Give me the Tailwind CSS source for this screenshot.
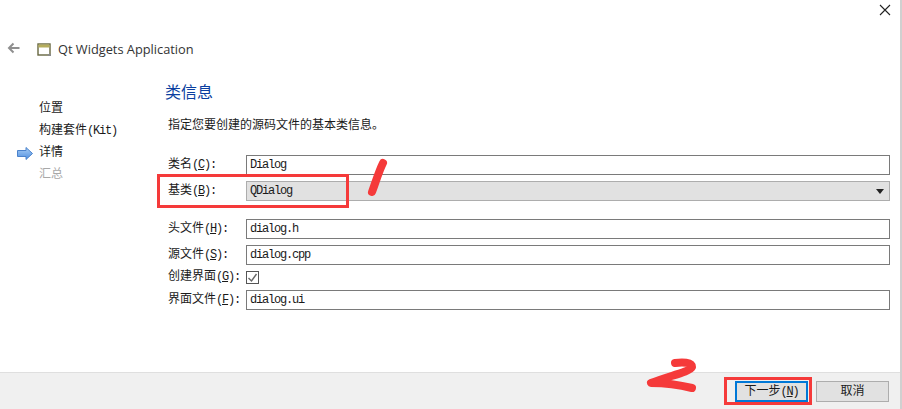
<!DOCTYPE html>
<html><head><meta charset="utf-8"><script src="https://cdn.jsdelivr.net/npm/@tailwindcss/browser@4"></script></head>
<body class="bg-white">
<div class="relative w-[902px] h-[409px] overflow-hidden bg-white flex flex-col border-r-[2px] border-[#d0d0d0] text-[12px] leading-[16px] text-[#1a1a1a] font-['Liberation_Mono','Noto_Sans_CJK_SC',monospace]">
  <div class="h-[372px] flex flex-col">
    <div class="h-[31px] flex justify-end items-start pt-[3px] pr-[9px]">
      <svg width="12" height="12" viewBox="0 0 12 12" class="mt-[1px]"><path d="M1 1L11 11M11 1L1 11" stroke="#222" stroke-width="1.1" fill="none"/></svg>
    </div>
    <div class="h-[38px] flex items-center pl-[7px]">
      <svg width="13" height="12" viewBox="0 0 13 12" class="-mt-[4px]"><path d="M12.5 6H2M6.5 1.5L2 6l4.5 4.5" stroke="#8f8f8f" stroke-width="2" fill="none"/></svg>
      <svg width="15" height="14" viewBox="0 0 15 14" class="ml-[17px] -mt-[1px]"><rect x="1" y="1" width="12" height="11" fill="#fff" stroke="#66663f" stroke-width="1.4"/><rect x="1.5" y="1.5" width="11" height="3" fill="#b5ad5c"/><path d="M11 11h3v2h-3z" fill="#8a8a8a"/></svg>
      <span class="ml-[6px] -mt-[2px] font-['Open_Sans'] text-[12.8px] text-[#333]">Qt Widgets Application</span>
    </div>
    <div class="flex flex-1">
      <div class="w-[165px] pt-[32px]">
        <div class="flex flex-col gap-[6px]">
          <div class="h-[16px] pl-[39px]">位置</div>
          <div class="h-[16px] pl-[39px]">构建套件<span class="tracking-[-1.2px]">(Kit)</span></div>
          <div class="h-[16px] pl-[17px] flex items-center gap-[6px]">
            <svg width="16" height="13" viewBox="0 0 16 13"><defs><linearGradient id="a" x1="0" y1="0" x2="0" y2="1"><stop offset="0" stop-color="#a8cdf5"/><stop offset="1" stop-color="#4f8fe0"/></linearGradient></defs><path d="M.5 3.5H9V.5l6.5 6-6.5 6v-3H.5z" fill="url(#a)" stroke="#4a82cc"/></svg>
            <span>详情</span>
          </div>
          <div class="h-[16px] pl-[39px] text-[#a8a8a8]">汇总</div>
        </div>
      </div>
      <div class="flex-1 pr-[10px]">
        <div class="text-[16px] leading-[22px] text-[#0b3fa0] mt-[14px]">类信息</div>
        <div class="mt-[13px] ml-[3px]">指定您要创建的源码文件的基本类信息。</div>
        <div class="mt-[21px] ml-[3px] flex flex-col">
          <div class="flex items-center h-[20px]">
            <span class="w-[78px]">类名<span class="tracking-[-1.2px]">(<span class="underline">C</span>):</span></span>
            <div class="flex-1 h-[20px] border border-[#7a7a7a] px-[3px] flex items-center"><span class="tracking-[-1.2px]">Dialog</span></div>
          </div>
          <div class="flex items-center h-[20px] mt-[6px]">
            <span class="w-[78px]">基类<span class="tracking-[-1.2px]">(<span class="underline">B</span>):</span></span>
            <div class="flex-1 h-[20px] border border-[#adadad] bg-[#e1e1e1] px-[3px] flex items-center justify-between pr-[5px]"><span class="tracking-[-1.2px]">QDialog</span>
              <svg width="8" height="5" viewBox="0 0 8 5"><path d="M0 0h8L4 5z" fill="#222"/></svg></div>
          </div>
          <div class="flex items-center h-[20px] mt-[18px]">
            <span class="w-[78px]">头文件<span class="tracking-[-1.2px]">(<span class="underline">H</span>):</span></span>
            <div class="flex-1 h-[20px] border border-[#7a7a7a] px-[3px] flex items-center"><span class="tracking-[-1.2px]">dialog.h</span></div>
          </div>
          <div class="flex items-center h-[20px] mt-[6px]">
            <span class="w-[78px]">源文件<span class="tracking-[-1.2px]">(<span class="underline">S</span>):</span></span>
            <div class="flex-1 h-[20px] border border-[#7a7a7a] px-[3px] flex items-center"><span class="tracking-[-1.2px]">dialog.cpp</span></div>
          </div>
          <div class="flex items-center h-[20px] mt-[2px]">
            <span class="w-[78px]">创建界面<span class="tracking-[-1.2px]">(<span class="underline">G</span>):</span></span>
            <div class="w-[13px] h-[13px] border border-[#555] flex items-center justify-center"><svg width="11" height="11" viewBox="0 0 11 11"><path d="M1.5 6l3 3 5-7" stroke="#666" stroke-width="1.4" fill="none"/></svg></div>
          </div>
          <div class="flex items-center h-[20px] mt-[3px]">
            <span class="w-[78px]">界面文件<span class="tracking-[-1.2px]">(<span class="underline">F</span>):</span></span>
            <div class="flex-1 h-[20px] border border-[#7a7a7a] px-[3px] flex items-center"><span class="tracking-[-1.2px]">dialog.ui</span></div>
          </div>
        </div>
      </div>
    </div>
  </div>
  <div class="h-[37px] bg-[#f0f0f0] border-t border-[#dfdfdf] flex justify-end items-start pt-[8px] pr-[11px] gap-[8px]">
    <div class="w-[73px] h-[21px] bg-[#e1e1e1] border-[2px] border-[#0078d7] flex items-center justify-center">下一步<span class="tracking-[-1.2px]">(<span class="underline">N</span>)</span></div>
    <div class="w-[73px] h-[21px] bg-[#e1e1e1] border border-[#adadad] flex items-center justify-center">取消</div>
  </div>
  <div class="absolute left-[157px] top-[174px] w-[192px] h-[34px] border-[3px] border-[#f53a3a]"></div>
  <div class="absolute left-[724px] top-[377px] w-[88px] h-[28px] border-[3px] border-[#f53a3a]"></div>
  <svg class="absolute left-0 top-0" width="902" height="409" viewBox="0 0 902 409" fill="none"><path d="M383 163C379 171 376 181 372 192" stroke="#f53a3a" stroke-width="8" stroke-linecap="round"/><path d="M675 363C682 362 692 362 692 367C690 372 668 376 651 383C665 383 680 385 692 388" stroke="#f53a3a" stroke-width="8" stroke-linecap="round" stroke-linejoin="round"/></svg>
</div>
</body></html>
